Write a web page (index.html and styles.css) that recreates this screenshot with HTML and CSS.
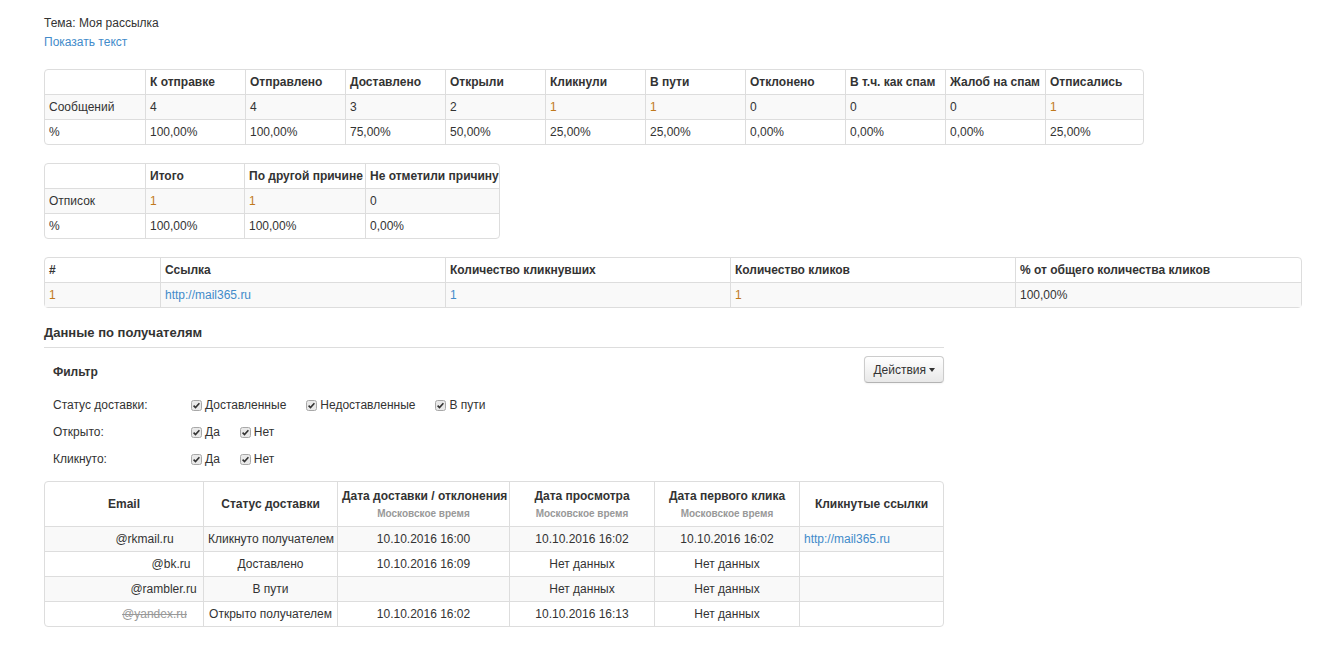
FILE: index.html
```html
<!DOCTYPE html>
<html lang="ru">
<head>
<meta charset="utf-8">
<title>Отчёт по рассылке</title>
<link rel="stylesheet" href="styles.css">
</head>
<body>
<div class="page">
  <div class="subject">Тема: Моя рассылка</div>
  <div><a class="link" href="#">Показать текст</a></div>

  <table class="tbl t1">
    <colgroup><col class="c100"><col class="c100"><col class="c100"><col class="c100"><col class="c100"><col class="c100"><col class="c100"><col class="c100"><col class="c100"><col class="c100"><col class="c98"></colgroup>
    <tr class="head"><th></th><th>К отправке</th><th>Отправлено</th><th>Доставлено</th><th>Открыли</th><th>Кликнули</th><th>В пути</th><th>Отклонено</th><th>В т.ч. как спам</th><th>Жалоб на спам</th><th>Отписались</th></tr>
    <tr class="odd"><td>Сообщений</td><td>4</td><td>4</td><td>3</td><td>2</td><td class="org">1</td><td class="org">1</td><td>0</td><td>0</td><td>0</td><td class="org">1</td></tr>
    <tr><td>%</td><td>100,00%</td><td>100,00%</td><td>75,00%</td><td>50,00%</td><td>25,00%</td><td>25,00%</td><td>0,00%</td><td>0,00%</td><td>0,00%</td><td>25,00%</td></tr>
  </table>

  <table class="tbl t2">
    <colgroup><col class="c100"><col class="c99"><col class="c121"><col class="c134"></colgroup>
    <tr class="head"><th></th><th>Итого</th><th>По другой причине</th><th>Не отметили причину</th></tr>
    <tr class="odd"><td>Отписок</td><td class="org">1</td><td class="org">1</td><td>0</td></tr>
    <tr><td>%</td><td>100,00%</td><td>100,00%</td><td>0,00%</td></tr>
  </table>

  <table class="tbl t3">
    <colgroup><col class="c115"><col class="c285"><col class="c285"><col class="c285"><col class="c286"></colgroup>
    <tr class="head"><th>#</th><th>Ссылка</th><th>Количество кликнувших</th><th>Количество кликов</th><th>% от общего количества кликов</th></tr>
    <tr class="odd"><td class="org">1</td><td><a class="link" href="#">http://mail365.ru</a></td><td><a class="link" href="#">1</a></td><td class="org">1</td><td>100,00%</td></tr>
  </table>

  <div class="recipients">
    <h4 class="section-title">Данные по получателям</h4>

    <div class="filter-head">
      <div class="filter-title">Фильтр</div>
      <button class="btn" type="button">Действия <span class="caret"></span></button>
    </div>

    <div class="filter-row">
      <div class="filter-label">Статус доставки:</div>
      <div class="opts">
        <label class="opt"><svg class="cb" viewBox="0 0 11 11"><rect x="0.5" y="0.5" width="10" height="10" rx="2" fill="#e9e9e9" stroke="#a8a8a8"/><path d="M2.6 5.6 L4.5 7.6 L8.4 3.2" fill="none" stroke="#333" stroke-width="1.6"/></svg>Доставленные</label>
        <label class="opt"><svg class="cb" viewBox="0 0 11 11"><rect x="0.5" y="0.5" width="10" height="10" rx="2" fill="#e9e9e9" stroke="#a8a8a8"/><path d="M2.6 5.6 L4.5 7.6 L8.4 3.2" fill="none" stroke="#333" stroke-width="1.6"/></svg>Недоставленные</label>
        <label class="opt"><svg class="cb" viewBox="0 0 11 11"><rect x="0.5" y="0.5" width="10" height="10" rx="2" fill="#e9e9e9" stroke="#a8a8a8"/><path d="M2.6 5.6 L4.5 7.6 L8.4 3.2" fill="none" stroke="#333" stroke-width="1.6"/></svg>В пути</label>
      </div>
    </div>
    <div class="filter-row">
      <div class="filter-label">Открыто:</div>
      <div class="opts">
        <label class="opt"><svg class="cb" viewBox="0 0 11 11"><rect x="0.5" y="0.5" width="10" height="10" rx="2" fill="#e9e9e9" stroke="#a8a8a8"/><path d="M2.6 5.6 L4.5 7.6 L8.4 3.2" fill="none" stroke="#333" stroke-width="1.6"/></svg>Да</label>
        <label class="opt"><svg class="cb" viewBox="0 0 11 11"><rect x="0.5" y="0.5" width="10" height="10" rx="2" fill="#e9e9e9" stroke="#a8a8a8"/><path d="M2.6 5.6 L4.5 7.6 L8.4 3.2" fill="none" stroke="#333" stroke-width="1.6"/></svg>Нет</label>
      </div>
    </div>
    <div class="filter-row">
      <div class="filter-label">Кликнуто:</div>
      <div class="opts">
        <label class="opt"><svg class="cb" viewBox="0 0 11 11"><rect x="0.5" y="0.5" width="10" height="10" rx="2" fill="#e9e9e9" stroke="#a8a8a8"/><path d="M2.6 5.6 L4.5 7.6 L8.4 3.2" fill="none" stroke="#333" stroke-width="1.6"/></svg>Да</label>
        <label class="opt"><svg class="cb" viewBox="0 0 11 11"><rect x="0.5" y="0.5" width="10" height="10" rx="2" fill="#e9e9e9" stroke="#a8a8a8"/><path d="M2.6 5.6 L4.5 7.6 L8.4 3.2" fill="none" stroke="#333" stroke-width="1.6"/></svg>Нет</label>
      </div>
    </div>

    <table class="tbl t4">
      <colgroup><col class="c158"><col class="c134"><col class="c172"><col class="c145"><col class="c145"><col class="c144"></colgroup>
      <tr class="head">
        <th>Email</th>
        <th>Статус доставки</th>
        <th>Дата доставки / отклонения<span class="tz">Московское время</span></th>
        <th>Дата просмотра<span class="tz">Московское время</span></th>
        <th>Дата первого клика<span class="tz">Московское время</span></th>
        <th>Кликнутые ссылки</th>
      </tr>
      <tr class="odd"><td><span class="hid w41"></span>@rkmail.ru</td><td>Кликнуто получателем</td><td>10.10.2016 16:00</td><td>10.10.2016 16:02</td><td>10.10.2016 16:02</td><td class="left"><a class="link" href="#">http://mail365.ru</a></td></tr>
      <tr><td><span class="hid w94"></span>@bk.ru</td><td>Доставлено</td><td>10.10.2016 16:09</td><td>Нет данных</td><td>Нет данных</td><td></td></tr>
      <tr class="odd"><td><span class="hid w79"></span>@rambler.ru</td><td>В пути</td><td></td><td>Нет данных</td><td>Нет данных</td><td></td></tr>
      <tr><td><span class="strike"><span class="hid w61"></span>@yandex.ru</span></td><td>Открыто получателем</td><td>10.10.2016 16:02</td><td>10.10.2016 16:13</td><td>Нет данных</td><td></td></tr>
    </table>
  </div>
</div>
</body>
</html>
```

FILE: styles.css
```css
* { box-sizing: border-box; }
html, body { margin: 0; padding: 0; background: #fff; }
body {
  font-family: "Liberation Sans", Arial, sans-serif;
  font-size: 12px;
  color: #333;
}
.page { padding: 14px 0 30px 44px; }
.subject, .page > div { line-height: 19px; }
.link { color: #428bca; text-decoration: none; }
.org { color: #c0791b; }

.tbl {
  border-collapse: separate;
  border-spacing: 0;
  border: 1px solid #ddd;
  border-radius: 4px;
  table-layout: fixed;
  line-height: 16px;
}
.tbl th, .tbl td {
  padding: 4px 4px;
  text-align: left;
  vertical-align: top;
  white-space: nowrap;
  overflow: hidden;
  border-left: 1px solid #ddd;
  border-top: 1px solid #ddd;
}
.tbl th { font-weight: bold; }
.tbl th:first-child, .tbl td:first-child { border-left: 0; }
.tbl tr:first-child th, .tbl tr:first-child td { border-top: 0; }
.tbl tr.odd td { background: #f9f9f9; }

.t1 { width: 1100px; margin-top: 17px; }
.t2 { width: 456px; margin-top: 18px; }
.t3 { width: 1258px; margin-top: 18px; }

.c98 { width: 98px; } .c99 { width: 99px; } .c100 { width: 100px; }
.c121 { width: 121px; } .c134 { width: 134px; } .c115 { width: 115px; }
.c285 { width: 285px; } .c286 { width: 286px; }
.c158 { width: 158px; } .c172 { width: 172px; } .c145 { width: 145px; } .c144 { width: 144px; }

.recipients { width: 900px; }
.section-title {
  margin: 15px 0 0;
  font-size: 13px;
  line-height: 20px;
  font-weight: bold;
  padding-bottom: 4px;
  border-bottom: 1px solid #ddd;
}
.filter-head {
  display: flex;
  justify-content: space-between;
  align-items: flex-start;
  margin-top: 8px;
}
.filter-title { font-weight: bold; padding: 8px 0 0 9px; line-height: 17px; }
.btn {
  font-family: inherit;
  font-size: 12px;
  color: #333;
  height: 27px;
  padding: 0 8px 0 8px;
  border: 1px solid #ccc;
  border-bottom-color: #b3b3b3;
  border-radius: 4px;
  background: linear-gradient(#ffffff, #e8e8e8);
  box-shadow: inset 0 1px 0 rgba(255,255,255,.2), 0 1px 2px rgba(0,0,0,.05);
  display: flex;
  align-items: center;
  gap: 3px;
}
.caret {
  width: 0; height: 0;
  border-left: 3px solid transparent;
  border-right: 3px solid transparent;
  border-top: 4px solid #333;
  margin-top: 1px;
}

.filter-row {
  display: flex;
  align-items: center;
  height: 27px;
  padding-left: 9px;
}
.filter-head + .filter-row { margin-top: 9px; }
.filter-label { width: 138px; }
.opts { display: flex; gap: 20px; }
.opt { display: flex; align-items: center; gap: 3px; }
.cb { width: 11px; height: 11px; display: block; }

.t4 { width: 900px; margin-top: 8px; }
.t4 th, .t4 td { text-align: center; }
.t4 tr.head th { height: 44px; vertical-align: middle; padding: 3px 4px; }
.t4 td.left { text-align: left; }
.tz {
  display: block;
  font-size: 10px;
  color: #999;
  font-weight: bold;
  line-height: 14px;
  margin-top: 3px;
}
.hid { display: inline-block; }
.w41 { width: 41px; } .w94 { width: 94px; } .w79 { width: 79px; } .w61 { width: 61px; }
.strike { color: #999; text-decoration: line-through; }
```
